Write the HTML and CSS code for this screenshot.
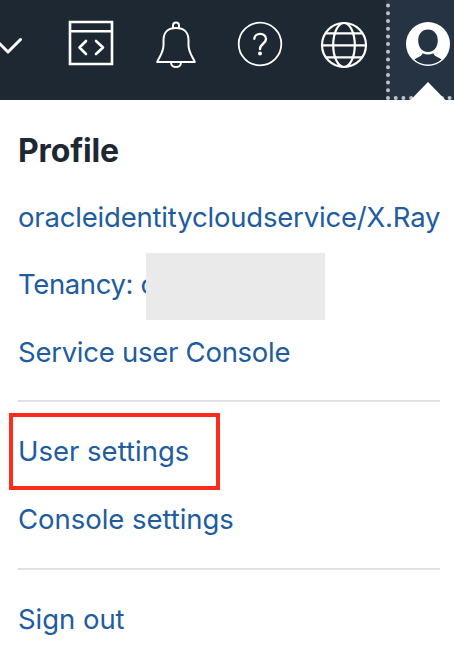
FILE: index.html
```html
<!DOCTYPE html>
<html lang="en">
<head>
<meta charset="utf-8">
<title>Profile</title>
<link rel="stylesheet" href="styles.css">
</head>
<body>
<header class="topbar">
  <svg class="icon chevron" width="24" height="100" viewBox="0 0 24 100"><path d="M-5 39 8 52 20.500 39.500" stroke-width="3"/></svg>
  <svg class="icon dev" width="48" height="100" viewBox="67 0 48 100"><path d="M70 22h42v42H70zM70 31.300h42" stroke-width="2.600" stroke-linecap="butt" stroke-linejoin="miter"/><path d="M86 41l-6.500 6.500 6.500 6.500M96 41l7 6.500-7 6.500" stroke-width="2.600"/></svg>
  <svg class="icon bell" width="42" height="100" viewBox="155 0 42 100"><path d="M157.200 62h37.600c-2-5-6.300-9.500-6.300-17v-5c0-8-5-12-12.500-12s-12.500 4-12.500 12v5c0 7.500-4.300 12-6.300 17zM173 28v-2.500a3 3 0 0 1 6 0V28M171 62.500c0 6 10 6 10 0" stroke-width="2"/></svg>
  <svg class="icon help" width="46" height="100" viewBox="237 0 46 100"><circle cx="260" cy="44" r="21.300" stroke-width="1.800"/><path d="M254.300 38.800c.2-6.500 11.700-6.800 11.700.2 0 4.800-6 4.700-6 10" stroke-width="2.400"/><circle class="fill" cx="260" cy="53.500" r="2"/></svg>
  <svg class="icon globe" width="48" height="100" viewBox="320 0 48 100"><circle cx="344" cy="45" r="22"/><ellipse cx="344" cy="45" rx="10.800" ry="22"/><path d="M326.500 33.300h35M322 45.300h44M326.500 57.300h35"/></svg>
  <svg class="icon profile" width="68" height="100" viewBox="386 0 68 100">
    <path class="dots" d="M388 98V0M388 98H460"/>
    <path class="fill" d="M428 82l17.500 18h-35z"/>
    <circle class="fill" cx="428" cy="44" r="22"/>
    <path class="cut" d="M428 29.500c6 0 9.800 4.700 9.800 11 0 7-4.300 11.500-9.800 11.500s-9.800-4.500-9.800-11.500c0-6.300 3.800-11 9.800-11zM422.500 53.300q5.500 2.500 11 0c.8 3.500 4.500 3.400 8 6.200-7.500 6.700-19.500 6.700-27 0 3.500-2.800 7.200-2.700 8-6.200z"/>
  </svg>
</header>
<main class="menu">
  <h1>Profile</h1>
  <a class="item account">oracleidentitycloudservice/X.Ray</a>
  <a class="item tenancy">Tenancy: o<span class="mask"></span></a>
  <a class="item service">Service user Console</a>
  <hr>
  <a class="item user">User settings<span class="highlight"></span></a>
  <a class="item console">Console settings</a>
  <hr class="last">
  <a class="item signout">Sign out</a>
</main>
</body>
</html>
```

FILE: styles.css
```css
* { box-sizing: border-box; }

body {
  margin: 0;
  background: #fff;
  font-family: Inter, sans-serif;
  overflow: hidden;
}

.topbar {
  display: flex;
  height: 100px;
  background: #1e2833;
}

.icon {
  flex: none;
  fill: none;
  stroke: #fff;
  stroke-width: 2.2;
  stroke-linecap: round;
  stroke-linejoin: round;
}

.dev { margin-left: 43px; }
.bell { margin-left: 40px; }
.help { margin-left: 40px; }
.globe { margin-left: 37px; }
.profile { margin-left: 18px; background: #253343; }

.icon .fill { fill: #fff; stroke: none; }
.icon .cut { fill: #253343; stroke: none; }
.icon .dots { stroke: #bfc3c8; stroke-width: 4; stroke-dasharray: 0 7.7; }

.menu {
  display: flex;
  flex-direction: column;
  align-items: flex-start;
  padding: 18px 14px 0 18px;
}

h1 {
  margin: 0;
  height: 65px;
  font-size: 32px;
  font-weight: 700;
  line-height: 66px;
  letter-spacing: -0.15px;
  color: #1e2833;
}

.item {
  position: relative;
  height: 68px;
  font-size: 27.5px;
  line-height: 69px;
  white-space: nowrap;
  color: #205c9f;
}

.account { letter-spacing: -0.19px; }
.tenancy { height: 67px; letter-spacing: -0.37px; line-height: 66px; }
.service { letter-spacing: -0.26px; }
.console, .signout { letter-spacing: -0.04px; }

hr {
  width: 100%;
  height: 2px;
  margin: 14px 0 15px;
  border: 0;
  background: #e0e1e6;
}

hr.last { margin-top: 15px; }

.mask {
  position: absolute;
  left: 128px;
  top: 2px;
  width: 179px;
  height: 67px;
  background: #eaeaea;
}

.highlight {
  position: absolute;
  left: -9px;
  top: -4px;
  width: 211px;
  height: 77px;
  border: 4px solid #ff2b1d;
}
```
